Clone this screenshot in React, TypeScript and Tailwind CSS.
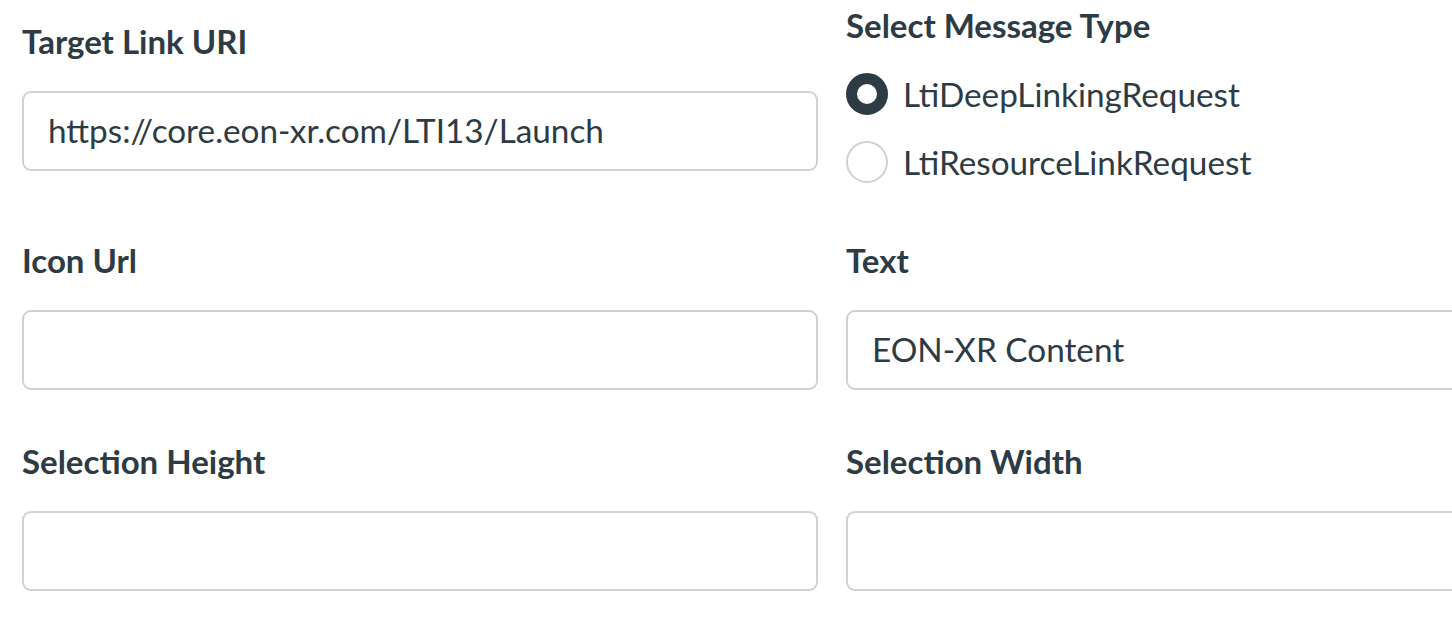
import React from 'react';

const font = { fontFamily: 'Lato, "Liberation Sans", sans-serif' };

function Field({ label, value }: { label: string; value?: string }) {
  return <div>
      <div className="h-[40px] text-[33px] leading-[40px] font-bold text-[#2d3b45] whitespace-nowrap">{label}</div>
      <div className="mt-[30px] h-[80px] rounded-[9px] border-2 border-[#cdd2d6] bg-white pl-[24px] pb-[3px] flex items-center text-[33.3px] leading-[40px] text-[#2d3b45] whitespace-nowrap">
        {value}
      </div>
    </div>;
}

function Radio({ label, checked }: { label: string; checked?: boolean }) {
  return <div className="h-[40px] flex items-center gap-[15px] text-[33.3px] leading-[40px] text-[#2d3b45] whitespace-nowrap">
      {checked ? <span className="w-[42px] h-[42px] rounded-full border-[11px] border-[#2d3b45] bg-white shrink-0" /> : <span className="w-[42px] h-[42px] rounded-full border-2 border-[#cdd2d6] bg-white shrink-0" />}
      <span>{label}</span>
    </div>;
}

export default function App() {
  return <div className="w-screen h-[625px] overflow-hidden bg-white" style={font}>
      <div className="pt-[2px] pl-[22px]">
        <div className="grid grid-cols-[796px_796px] gap-x-[28px] items-start">
          <div className="pt-[19px]">
            <Field label="Target Link URI" value="https://core.eon-xr.com/LTI13/Launch" />
          </div>
          <div className="pt-[3px]">
            <div className="h-[40px] text-[33px] leading-[40px] font-bold text-[#2d3b45] whitespace-nowrap">Select Message Type</div>
            <div className="mt-[29px] flex flex-col gap-[28px]">
              <Radio label="LtiDeepLinkingRequest" checked />
              <Radio label="LtiResourceLinkRequest" />
            </div>
          </div>
        </div>
        <div className="mt-[58px] grid grid-cols-[796px_796px] gap-x-[28px]">
          <Field label="Icon Url" />
          <Field label="Text" value="EON-XR Content" />
        </div>
        <div className="mt-[51px] grid grid-cols-[796px_796px] gap-x-[28px]">
          <Field label="Selection Height" />
          <Field label="Selection Width" />
        </div>
      </div>
    </div>;
}
